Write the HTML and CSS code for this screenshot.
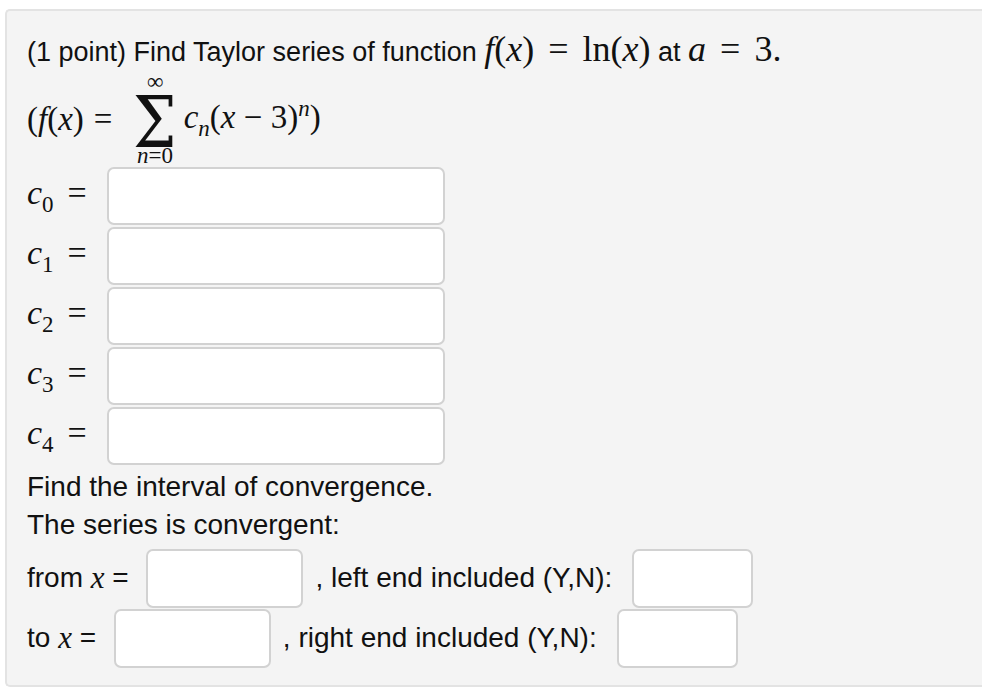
FILE: index.html
```html
<!DOCTYPE html>
<html>
<head>
<meta charset="utf-8">
<link rel="stylesheet" href="styles.css">
</head>
<body>
<div class="problem">
  <div class="title">(1 point) Find Taylor series of function <span class="math tmath"><i>f</i>(<i>x</i>)<span class="op">=</span>ln(<i>x</i>)</span> at <span class="math tmath"><i>a</i><span class="op">=</span>3.</span></div>
  <div class="sumline math">
    <span>(<i>f</i>(<i>x</i>)<span class="op">=</span></span>
    <span class="sum"><span class="lim">∞</span><span class="sigma">Σ</span><span class="lim"><i>n</i>=0</span></span>
    <span><i>c</i><sub><i>n</i></sub>(<i>x</i> − 3)<sup><i>n</i></sup>)</span>
  </div>
  <div class="coeffs">
    <div class="crow"><span class="clabel math"><i>c</i><sub>0</sub><span class="op">=</span></span><span class="box wide"></span></div>
    <div class="crow"><span class="clabel math"><i>c</i><sub>1</sub><span class="op">=</span></span><span class="box wide"></span></div>
    <div class="crow"><span class="clabel math"><i>c</i><sub>2</sub><span class="op">=</span></span><span class="box wide"></span></div>
    <div class="crow"><span class="clabel math"><i>c</i><sub>3</sub><span class="op">=</span></span><span class="box wide"></span></div>
    <div class="crow"><span class="clabel math"><i>c</i><sub>4</sub><span class="op">=</span></span><span class="box wide"></span></div>
  </div>
  <div class="text">Find the interval of convergence.</div>
  <div class="text">The series is convergent:</div>
  <div class="irow first">from <i class="mx">x</i> = <span class="box mid"></span>, left end included (Y,N): <span class="box small"></span></div>
  <div class="irow">to <i class="mx">x</i> = <span class="box mid"></span>, right end included (Y,N): <span class="box small"></span></div>
</div>
</body>
</html>
```
FILE: styles.css
```css
html, body {
  margin: 0;
  padding: 0;
  background: #ffffff;
}
body {
  font-family: "Liberation Sans", Arial, sans-serif;
  color: #111;
}
.problem {
  margin: 9px 0 0 5px;
  width: 1000px;
  height: 678px;
  box-sizing: border-box;
  background: #f4f4f4;
  border: 2px solid #e3e3e3;
  border-right: none;
  border-radius: 5px;
  padding: 16px 0 0 20px;
  font-size: 28px;
}
.math {
  font-family: "Liberation Serif", "Times New Roman", serif;
  font-size: 33px;
}
.math i, i.mx {
  font-style: italic;
}
.op {
  padding: 0 10px;
}
.title {
  height: 44px;
  line-height: 44px;
  white-space: nowrap;
  font-size: 27px;
}
.tmath {
  font-size: 36px;
}
.tmath .op {
  padding: 0 14px;
}
.sumline {
  display: flex;
  align-items: center;
  gap: 4px;
  height: 96px;
}
.sum {
  display: flex;
  flex-direction: column;
  align-items: center;
  margin: 0 2px 0 6px;
}
.lim {
  display: block;
  font-size: 23px;
  height: 22px;
  line-height: 22px;
}
.sigma {
  display: block;
  font-family: "DejaVu Serif", "Liberation Serif", serif;
  font-weight: normal;
  font-size: 64px;
  line-height: 52px;
  height: 52px;
  transform: translateY(4px) scale(0.96, 1.1);
}
.sumline sub, .sumline sup, .clabel sub {
  font-size: 23px;
  font-style: normal;
}
.coeffs {
  display: flex;
  flex-direction: column;
  gap: 2px;
}
.crow {
  display: flex;
  align-items: center;
}
.clabel {
  width: 80px;
  font-size: 34px;
}
.clabel .op {
  padding: 0 0 0 14px;
}
.box {
  display: inline-block;
  background: #fff;
  border: 2px solid #d2d2d2;
  border-radius: 7px;
  box-sizing: border-box;
  vertical-align: middle;
}
.wide {
  width: 338px;
  height: 58px;
}
.mid {
  width: 157px;
  height: 59px;
  margin: 0 12px 0 10px;
}
.small {
  width: 121px;
  height: 59px;
  margin-left: 12px;
}
.text {
  line-height: 38px;
}
.coeffs + .text {
  margin-top: 3px;
}
.irow {
  display: flex;
  align-items: center;
  height: 60px;
  white-space: pre;
}
.irow.first {
  margin-top: 4px;
}
i.mx {
  font-family: "Liberation Serif", serif;
  font-size: 31px;
}
```
